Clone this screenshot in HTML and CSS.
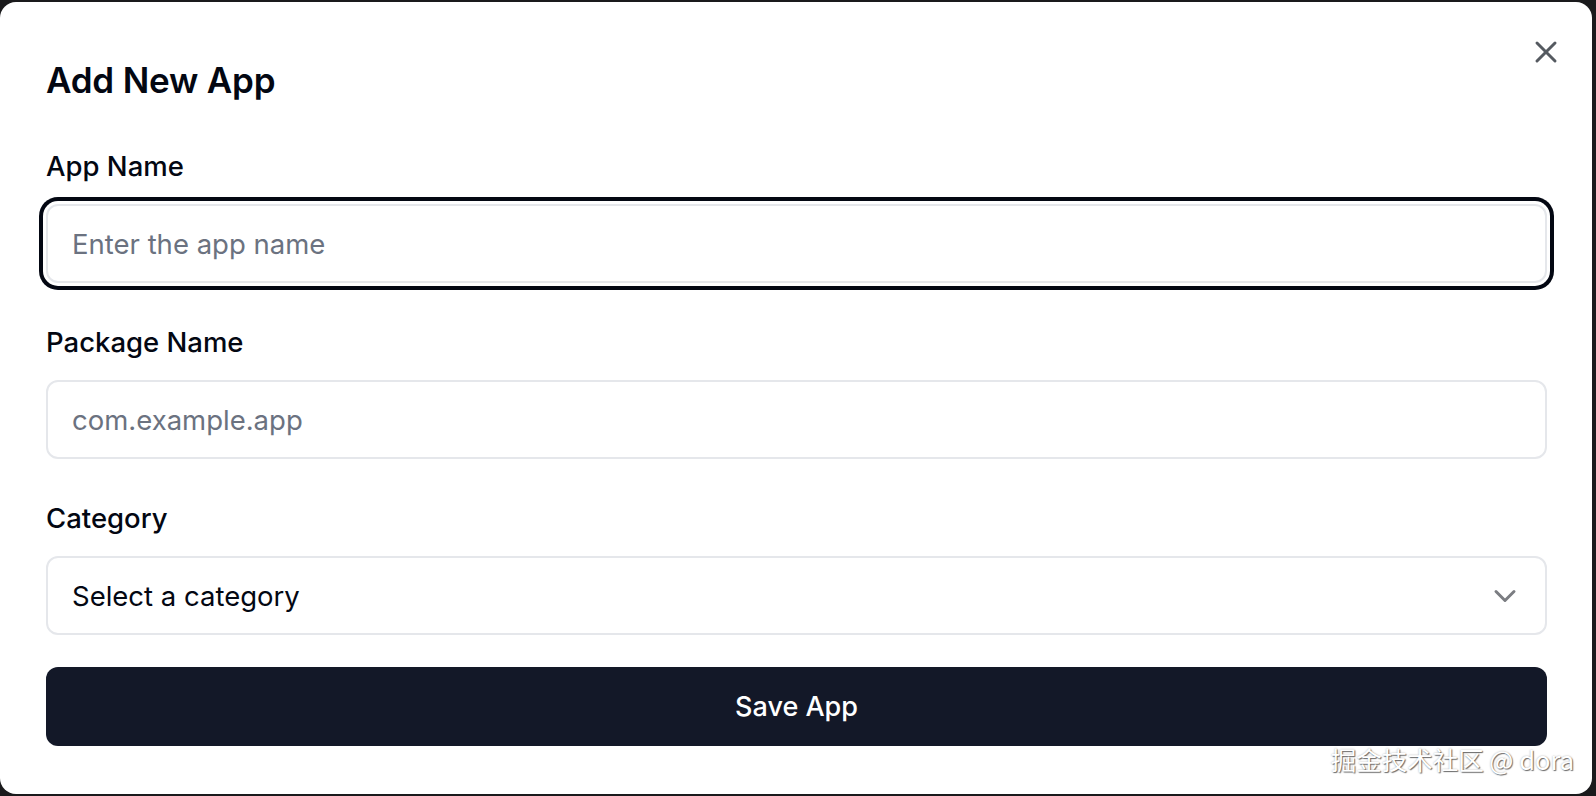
FILE: index.html
```html
<!DOCTYPE html>
<html lang="en">
<head>
<meta charset="utf-8">
<title>Add New App</title>
<link rel="stylesheet" href="styles.css">
</head>
<body>
<div class="modal">
  <button class="close" aria-label="Close">
    <svg viewBox="0 0 24 24" width="36" height="36" fill="none" stroke="currentColor" stroke-width="2" stroke-linecap="round" stroke-linejoin="round"><path d="M18 6 6 18"/><path d="m6 6 12 12"/></svg>
  </button>
  <h2 class="title">Add New App</h2>
  <form class="form">
    <div class="field">
      <label class="label">App Name</label>
      <div class="input focused"><span class="placeholder">Enter the app name</span></div>
    </div>
    <div class="field">
      <label class="label">Package Name</label>
      <div class="input"><span class="placeholder">com.example.app</span></div>
    </div>
    <div class="field">
      <label class="label">Category</label>
      <div class="input select"><span class="value">Select a category</span>
        <svg class="chevron" viewBox="0 0 24 24" width="36" height="36" fill="none" stroke="currentColor" stroke-width="2" stroke-linecap="round" stroke-linejoin="round"><path d="m6 9 6 6 6-6"/></svg>
      </div>
    </div>
    <button type="button" class="save">Save App</button>
  </form>
  <div class="watermark">掘金技术社区 @ dora</div>
</div>
</body>
</html>
```
FILE: styles.css
```css
* { box-sizing: border-box; }
html, body { margin: 0; padding: 0; }
body {
  background: #1a1a1c;
  width: 1596px;
  height: 796px;
  overflow: hidden;
  font-family: Inter, "Noto Sans", "Noto Sans CJK SC", sans-serif;
}
.modal {
  position: relative;
  margin-top: 2px;
  width: 1592px;
  height: 792px;
  background: #fff;
  border-radius: 16px;
  padding: 50px 45px 0 46px;
}
.close {
  position: absolute;
  left: 1528px;
  top: 32px;
  width: 36px;
  height: 36px;
  padding: 0;
  border: 0;
  background: none;
  color: #555a60;
  display: flex;
}
.title {
  margin: 0;
  font-size: 35px;
  line-height: 56px;
  font-weight: 600;
  color: #030712;
  letter-spacing: -0.2px;
}
.form {
  margin-top: 38px;
  display: flex;
  flex-direction: column;
  gap: 39px;
}
.field {
  display: flex;
  flex-direction: column;
  gap: 18px;
}
.label {
  font-size: 27.5px;
  line-height: 40px;
  font-weight: 500;
  color: #030712;
}
.input {
  position: relative;
  height: 79px;
  border: 2px solid #e5e7eb;
  border-radius: 12px;
  padding: 0 24px;
  display: flex;
  align-items: center;
  font-size: 27.5px;
  background: #fff;
}
.input.focused {
  box-shadow: 0 0 0 3px #fff, 0 0 0 7px #030712;
}
.placeholder { color: #6b7280; }
.value { color: #030712; flex: 1; }
.chevron {
  color: #7b7d82;
  margin-right: -2px;
}
.save {
  margin-top: -7px;
  height: 79px;
  border: 0;
  border-radius: 12px;
  background: #131828;
  color: #fff;
  font-family: inherit;
  font-size: 27px;
  font-weight: 500;
}
.watermark {
  position: absolute;
  right: 18px;
  bottom: 17px;
  font-size: 25.5px;
  color: #fff;
  text-shadow: 1px 1px 1px rgba(0,0,0,0.55), 0 0 2px rgba(0,0,0,0.3);
  font-family: "Noto Sans CJK SC", "Noto Sans", sans-serif;
}
```
